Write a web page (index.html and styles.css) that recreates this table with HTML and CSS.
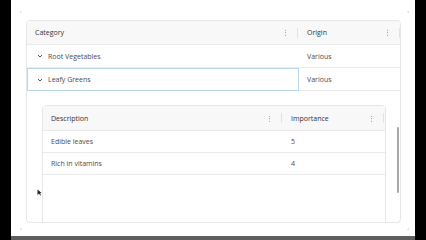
FILE: index.html
```html
<!DOCTYPE html>
<html lang="en">
<head>
    <meta charset="UTF-8">
    <title>Grid</title>
    <link rel="stylesheet" href="styles.css">
</head>
<body>
    <div class="frame">
        <div class="screen">
            <span class="corner tl"></span>
            <span class="corner tr"></span>
            <span class="corner bl"></span>
            <span class="corner br"></span>

            <!-- Master grid -->
            <div class="grid">
                <div class="row head">
                    <div class="cell">
                        <span class="label">Category</span>
                        <span class="menu"></span>
                        <span class="sep"></span>
                    </div>
                    <div class="cell">
                        <span class="label">Origin</span>
                        <span class="menu"></span>
                        <span class="sep"></span>
                    </div>
                </div>
                <div class="row body-row">
                    <div class="cell">
                        <svg class="chev" width="6" height="4" viewBox="0 0 6 4"><path d="M1 1 L3 3 L5 1" fill="none" stroke="#555" stroke-width="1"/></svg>
                        Root Vegetables
                    </div>
                    <div class="cell">Various</div>
                </div>
                <div class="row body-row">
                    <div class="cell focused">
                        <svg class="chev" width="6" height="4" viewBox="0 0 6 4"><path d="M1 1 L3 3 L5 1" fill="none" stroke="#555" stroke-width="1"/></svg>
                        Leafy Greens
                    </div>
                    <div class="cell">Various</div>
                </div>

                <!-- Detail grid -->
                <div class="detail">
                    <div class="subgrid">
                        <div class="row sub head">
                            <div class="cell">
                                <span class="label">Description</span>
                                <span class="menu"></span>
                                <span class="sep"></span>
                            </div>
                            <div class="cell">
                                <span class="label">Importance</span>
                                <span class="menu"></span>
                                <span class="sep"></span>
                            </div>
                        </div>
                        <div class="row sub body-row">
                            <div class="cell">Edible leaves</div>
                            <div class="cell">5</div>
                        </div>
                        <div class="row sub body-row">
                            <div class="cell">Rich in vitamins</div>
                            <div class="cell">4</div>
                        </div>
                    </div>
                </div>

                <div class="scrollbar"></div>
            </div>

            <svg class="cursor" width="5" height="7" viewBox="0 0 5 7"><path d="M0.5 0.5 L0.5 6 L2 4.6 L3.2 6.5 L4 6 L2.9 4.2 L4.6 4 Z" fill="#222"/></svg>
        </div>
        <div class="bar"></div>
    </div>
</body>
</html>
```

FILE: styles.css
```css
/* General */
* {
    margin: 0;
    padding: 0;
    box-sizing: border-box;
}

body {
    background: #000;
    font-family: 'Open Sans', 'Noto Sans', sans-serif;
    font-size: 7px;
    color: #4a4a4a;
    width: 426px;
    height: 240px;
    overflow: hidden;
}

.frame {
    margin-left: 11px;
    width: 404px;
}

.screen {
    position: relative;
    height: 236px;
    background: #fff;
    padding: 20px 0 0 15px;
}

.bar {
    height: 4px;
    background: #5e5e5e;
}

/* Frame corners */
.corner {
    position: absolute;
    width: 2px;
    height: 2px;
    border-color: #e2e2e2;
    border-style: solid;
    border-width: 0;
}

.tl { left: 9px; top: 11px; border-top-width: 1px; border-left-width: 1px; }
.tr { right: 6px; top: 11px; border-top-width: 1px; border-right-width: 1px; }
.bl { left: 9px; bottom: 6px; border-bottom-width: 1px; border-left-width: 1px; }
.br { right: 6px; bottom: 6px; border-bottom-width: 1px; border-right-width: 1px; }

/* Master grid */
.grid {
    position: relative;
    width: 375px;
    height: 203px;
    border: 1px solid #e6e6e6;
    border-radius: 4px;
    overflow: hidden;
}

.row {
    display: grid;
    grid-template-columns: 272px 102px;
    border-bottom: 1px solid #ebebeb;
}

.row.head {
    height: 24px;
    background: #f8f8f8;
    color: #333;
}

.row.body-row {
    height: 23px;
}

.cell {
    display: flex;
    align-items: center;
    padding-left: 8px;
    white-space: nowrap;
    color: #4a4a4a;
}

.head .cell {
    padding-right: 1px;
    color: #333;
}

.head .label {
    flex: 1;
}

.menu {
    width: 1px;
    height: 7px;
    background: radial-gradient(circle, #888 0.6px, transparent 0.7px) 0 0 / 1px 2.5px repeat-y;
    margin-right: 11px;
}

.sep {
    width: 1px;
    height: 10px;
    background: #e2e2e2;
}

.chev {
    margin: 0 5px 0 2px;
}

.focused {
    border: 1px solid #b8d9e8;
    margin-bottom: -1px;
    padding-left: 7px;
}

/* Detail grid */
.detail {
    padding: 14px 15px 0 15px;
}

.subgrid {
    width: 344px;
    height: 170px;
    border: 1px solid #e6e6e6;
    border-radius: 4px;
}

.row.sub {
    grid-template-columns: 240px 102px;
}

.row.sub.head {
    height: 25px;
}

.row.sub.body-row {
    height: 22px;
}

.scrollbar {
    position: absolute;
    right: 1px;
    top: 106px;
    width: 2px;
    height: 66px;
    background: #a8a8a8;
    border-radius: 1px;
}

.cursor {
    position: absolute;
    left: 26px;
    top: 189px;
}
```
